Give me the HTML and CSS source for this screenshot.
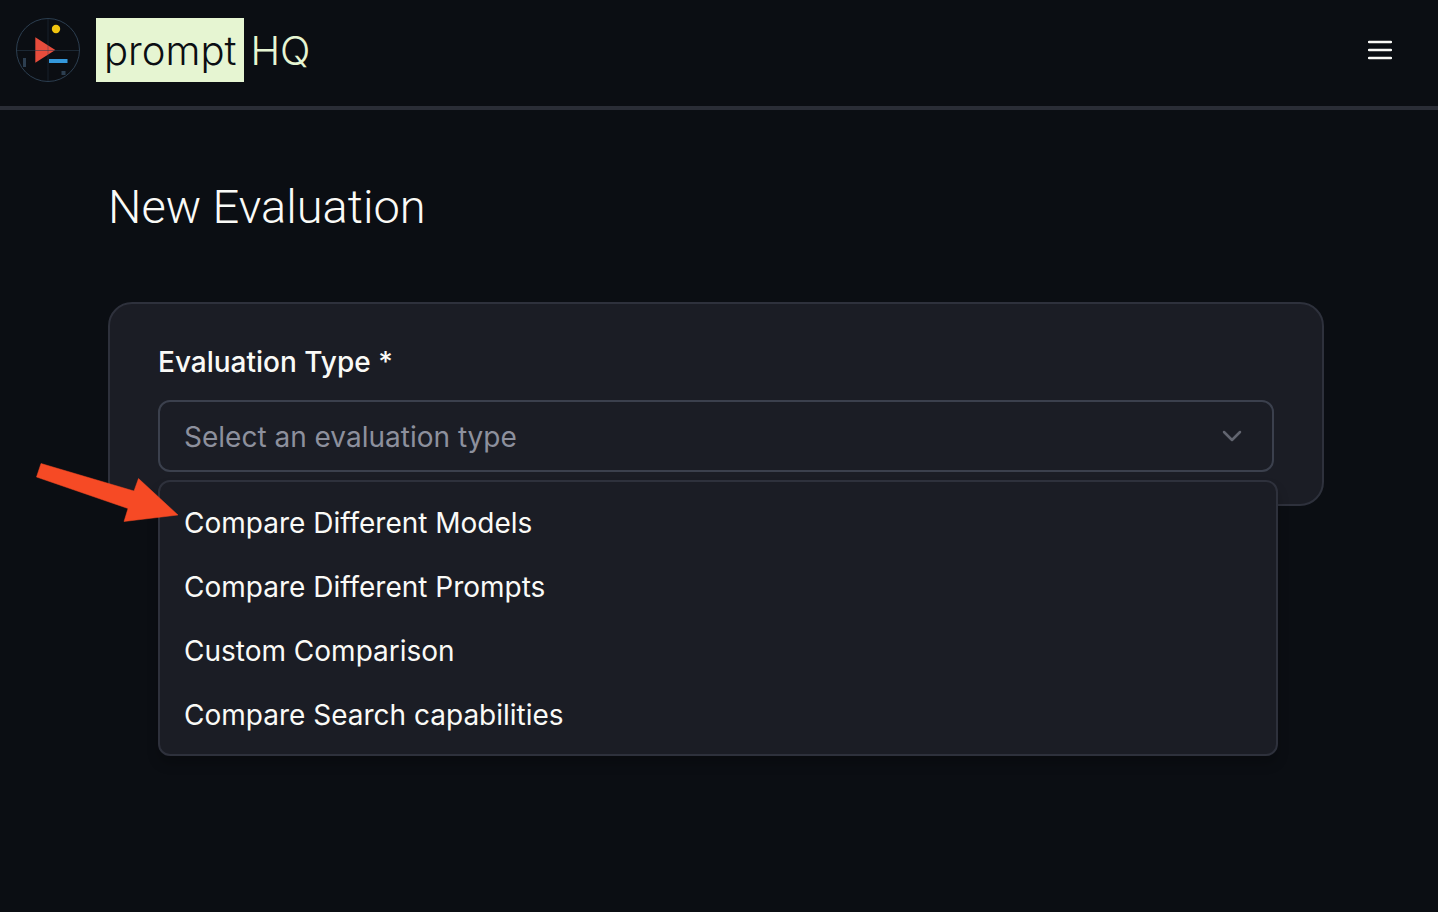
FILE: index.html
```html
<!DOCTYPE html>
<html lang="en">

<head>
    <meta charset="UTF-8">
    <meta name="viewport" content="width=device-width, initial-scale=1.0">
    <title>New Evaluation - prompt HQ</title>
    <link rel="stylesheet" href="styles.css">
</head>

<body>
    <header class="site-header">
        <a class="brand" href="#">
            <svg class="brand-logo" viewBox="0 0 64 64" aria-hidden="true">
                <circle cx="32" cy="32" r="31.5" fill="none" stroke="#2c3e50" />
                <path d="M19.3 19.2 39.3 32 19.3 44.8Z" fill="#e74c3c" />
                <path d="M0 32.5H64" stroke="#2c3e50" stroke-opacity=".55" />
                <path d="M32 0V64" stroke="#2c3e50" stroke-width="2" stroke-opacity=".2" />
                <circle cx="40" cy="11" r="4.2" fill="#f1c40f" />
                <rect x="33" y="41" width="18.5" height="4" fill="#3498db" />
                <rect x="7" y="40" width="3" height="9" fill="#2c3e50" />
                <rect x="45.5" y="53" width="4" height="4" fill="#2c3e50" />
            </svg>
            <span class="brand-name"><span class="brand-mark">prompt</span><span class="brand-hq">HQ</span></span>
        </a>
        <button class="menu-button" type="button" aria-label="Open menu">
            <svg width="24" height="20" viewBox="0 0 24 20" aria-hidden="true">
                <path d="M1 2H23M1 10H23M1 18H23" stroke="#fafaf7" stroke-width="2.5" stroke-linecap="round" />
            </svg>
        </button>
    </header>

    <main class="page">
        <h1>New Evaluation</h1>

        <form class="card">
            <label for="evaluation-type">Evaluation Type *</label>
            <div class="field">
                <select id="evaluation-type" class="select">
                    <option value="">Select an evaluation type</option>
                </select>
                <svg class="chevron" width="20" height="12" viewBox="0 0 20 12" aria-hidden="true">
                    <path d="M2 2 10 10 18 2" fill="none" stroke="#626570" stroke-width="2.5" stroke-linecap="round" stroke-linejoin="round" />
                </svg>
                <div class="dropdown">
                    <button type="button">Compare Different Models</button>
                    <button type="button">Compare Different Prompts</button>
                    <button type="button">Custom Comparison</button>
                    <button type="button">Compare Search capabilities</button>
                </div>
                <svg class="arrow" width="142" height="60" viewBox="0 0 142 60" aria-hidden="true">
                    <path d="M5 .5 98 28 102.500 15.500 142 52 88 58.500 92 45.500 .5 14Z" fill="#f64a25" stroke="#f64a25" stroke-width=".5" stroke-linejoin="round" />
                </svg>
            </div>
        </form>
    </main>
</body>

</html>
```
FILE: styles.css
```css
* {
    box-sizing: border-box;
}

body {
    margin: 0;
    min-height: 100vh;
    background-color: #0b0e13;
    color: #fafaf7;
    font-family: Inter, "Liberation Sans", sans-serif;
    font-size: 28px;
}

.site-header {
    display: flex;
    justify-content: space-between;
    align-items: center;
    padding: 18px 46px 24px 16px;
    border-bottom: 4px solid #2a2d36;
}

.brand {
    display: flex;
    gap: 16px;
    color: #e6f5d2;
    text-decoration: none;
}

.brand-logo {
    width: 64px;
    height: 64px;
}

.brand-name {
    display: flex;
    font-size: 40px;
    font-weight: 300;
    line-height: 62px;
}

.brand-mark {
    padding: 2px 8px 0;
    background-color: #e6f5d2;
    color: #0b0e13;
}

.brand-hq {
    padding: 2px 0 0 6px;
}

.menu-button {
    display: flex;
    padding: 0;
    border: none;
    background: none;
}

.page {
    padding: 64px 114px 64px 108px;
}

h1 {
    margin: 0 0 62px;
    font-family: Roboto, Inter, sans-serif;
    font-size: 47px;
    font-weight: 300;
    line-height: 66px;
}

.card {
    padding: 40px 48px 32px;
    border: 2px solid #2e313c;
    border-radius: 24px;
    background-color: #1b1d25;
}

label {
    display: block;
    margin-bottom: 20px;
    font-weight: 500;
    line-height: 36px;
}

.field {
    position: relative;
}

.select {
    display: block;
    width: 100%;
    height: 72px;
    padding: 2px 24px 0;
    border: 2px solid #3b404d;
    border-radius: 12px;
    background-color: #1b1d25;
    color: #8d909d;
    font: inherit;
    appearance: none;
}

.chevron {
    position: absolute;
    top: 30px;
    right: 32px;
    pointer-events: none;
}

/* menu hangs over the bottom edge of the card */
.dropdown {
    position: absolute;
    top: 80px;
    left: 0;
    right: -4px;
    padding: 8px 0;
    border: 2px solid #2e313c;
    border-radius: 12px;
    background-color: #1b1d25;
    box-shadow: 0 8px 12px rgba(0, 0, 0, 0.2);
}

.dropdown button {
    display: block;
    width: 100%;
    height: 64px;
    padding: 2px 24px 0;
    border: none;
    background: none;
    color: inherit;
    font: inherit;
    text-align: left;
}

.dropdown button:hover {
    background-color: #2a2d36;
}

.arrow {
    position: absolute;
    top: 63px;
    left: -122px;
    pointer-events: none;
}
```
